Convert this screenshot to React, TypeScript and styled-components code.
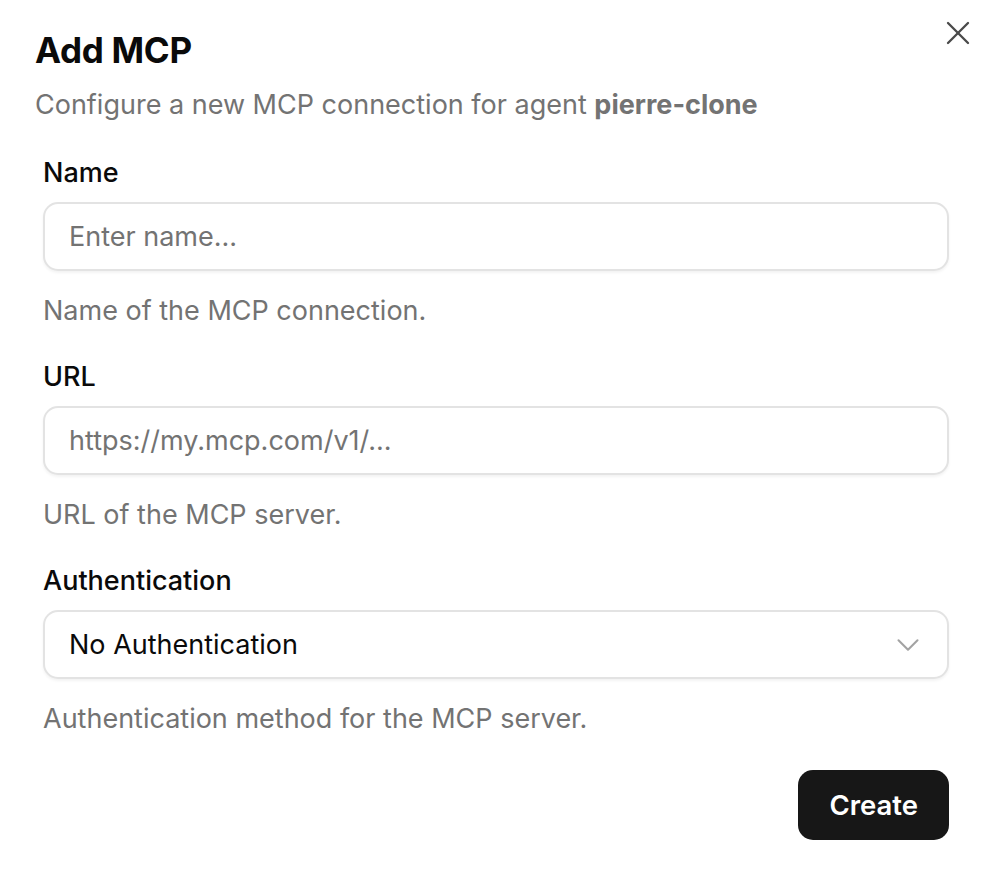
import styled, { createGlobalStyle } from 'styled-components';
import { useState } from 'react';

const GlobalStyle = createGlobalStyle`
  html, body {
    margin: 0;
    padding: 0;
    background: #ffffff;
  }
  body {
    font-family: Inter, 'Noto Sans', sans-serif;
    color: #0a0a0a;
  }
  * {
    box-sizing: border-box;
  }
`;

const Dialog = styled.div`
  position: relative;
  width: 990px;
  min-height: 870px;
  background: #ffffff;
  padding: 28px 41px 0 35px;
`;

const CloseButton = styled.button`
  position: absolute;
  top: 13px;
  right: 12px;
  width: 40px;
  height: 40px;
  padding: 0;
  border: none;
  background: transparent;
  color: #4a4a4a;
  display: flex;
  align-items: center;
  justify-content: center;
  cursor: pointer;
`;

const Header = styled.div`
  display: flex;
  flex-direction: column;
  gap: 16px;
`;

const Title = styled.h2`
  margin: 0;
  font-size: 35px;
  line-height: 44px;
  font-weight: 700;
  letter-spacing: -0.3px;
  color: #0a0a0a;
`;

const Subtitle = styled.p`
  margin: 0;
  font-size: 27px;
  line-height: 34px;
  color: #737373;

  strong {
    font-weight: 700;
  }
`;

const Form = styled.form`
  display: flex;
  flex-direction: column;
  gap: 34px;
  padding: 35px 0 0 8px;
`;

const Field = styled.div`
  display: flex;
  flex-direction: column;
`;

const Label = styled.label`
  font-size: 27px;
  line-height: 32px;
  font-weight: 500;
  color: #0a0a0a;
  margin-bottom: 13px;
`;

const Control = styled.div`
  position: relative;
  height: 69px;
  border: 2px solid #e3e3e3;
  border-radius: 15px;
  background: #ffffff;
  box-shadow: 0 2px 3px rgba(0, 0, 0, 0.05);
  display: flex;
  align-items: center;
`;

const Input = styled.input`
  width: 100%;
  height: 100%;
  border: none;
  outline: none;
  background: transparent;
  padding: 0 24px;
  font-family: inherit;
  font-size: 27px;
  color: #0a0a0a;

  &::placeholder {
    color: #737373;
  }
`;

const SelectValue = styled.div`
  flex: 1;
  padding: 0 24px;
  font-size: 27px;
  color: #0a0a0a;
`;

const Chevron = styled.span`
  display: flex;
  padding-right: 20px;
  color: #a3a3a3;
`;

const Hint = styled.p`
  margin: 24px 0 0;
  font-size: 27px;
  line-height: 32px;
  color: #737373;
`;

const Footer = styled.div`
  display: flex;
  justify-content: flex-end;
  margin-top: 1px;
`;

const SubmitButton = styled.button`
  height: 70px;
  padding: 0 31px;
  border: none;
  border-radius: 15px;
  background: #171717;
  color: #ffffff;
  font-family: inherit;
  font-size: 27.5px;
  font-weight: 600;
  cursor: pointer;
`;

const fields = [
  { id: 'name', label: 'Name', placeholder: 'Enter name...', hint: 'Name of the MCP connection.' },
  { id: 'url', label: 'URL', placeholder: 'https://my.mcp.com/v1/...', hint: 'URL of the MCP server.' },
];

export default function App() {
  const [values, setValues] = useState<Record<string, string>>({ name: '', url: '' });

  return (
    <>
      <GlobalStyle />
      <Dialog>
        <CloseButton aria-label="Close">
          <svg width="40" height="40" viewBox="0 0 24 24" fill="none" stroke="currentColor" strokeWidth="1.4" strokeLinecap="round">
            <path d="M18 6 6 18" />
            <path d="m6 6 12 12" />
          </svg>
        </CloseButton>

        <Header>
          <Title>Add MCP</Title>
          <Subtitle>
            Configure a new MCP connection for agent <strong>pierre-clone</strong>
          </Subtitle>
        </Header>

        <Form onSubmit={e => e.preventDefault()}>
          {fields.map(f => (
            <Field key={f.id}>
              <Label htmlFor={f.id}>{f.label}</Label>
              <Control>
                <Input
                  id={f.id}
                  placeholder={f.placeholder}
                  value={values[f.id]}
                  onChange={e => setValues({ ...values, [f.id]: e.target.value })}
                />
              </Control>
              <Hint>{f.hint}</Hint>
            </Field>
          ))}

          <Field>
            <Label>Authentication</Label>
            <Control>
              <SelectValue>No Authentication</SelectValue>
              <Chevron>
                <svg width="38" height="38" viewBox="0 0 24 24" fill="none" stroke="currentColor" strokeWidth="1.3" strokeLinecap="round" strokeLinejoin="round">
                  <path d="m6 9 6 6 6-6" />
                </svg>
              </Chevron>
            </Control>
            <Hint>Authentication method for the MCP server.</Hint>
          </Field>

          <Footer>
            <SubmitButton type="submit">Create</SubmitButton>
          </Footer>
        </Form>
      </Dialog>
    </>
  );
}
